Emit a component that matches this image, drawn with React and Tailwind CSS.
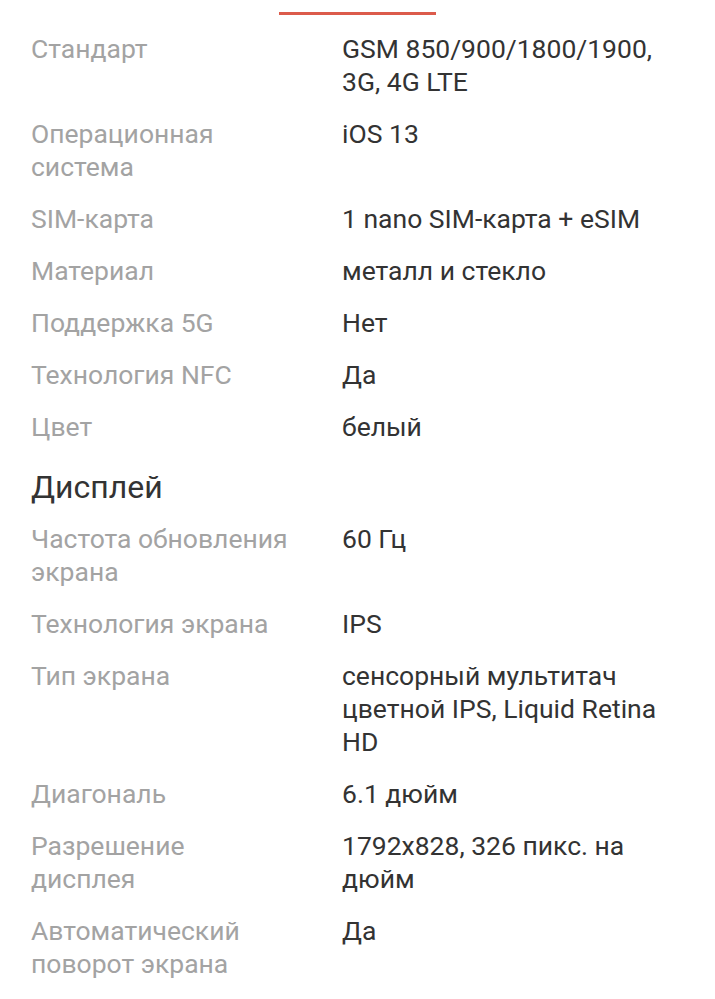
const general = [
  ["Стандарт", "GSM 850/900/1800/1900, 3G, 4G LTE"],
  ["Операционная система", "iOS 13"],
  ["SIM-карта", "1 nano SIM-карта + eSIM"],
  ["Материал", "металл и стекло"],
  ["Поддержка 5G", "Нет"],
  ["Технология NFC", "Да"],
  ["Цвет", "белый"],
];

const display = [
  ["Частота обновления экрана", "60 Гц"],
  ["Технология экрана", "IPS"],
  ["Тип экрана", "сенсорный мультитач цветной IPS, Liquid Retina HD"],
  ["Диагональ", "6.1 дюйм"],
  ["Разрешение дисплея", "1792x828, 326 пикс. на дюйм"],
  ["Автоматический поворот экрана", "Да"],
];

function SpecRow({ label, value }) {
  return (
    <div className="flex text-[26.5px] leading-[33px]">
      <div className="w-[311px] shrink-0 pr-[50px] text-[#a3a3a3]">{label}</div>
      <div className="flex-1 pr-[10px] text-[#333333]">{value}</div>
    </div>
  );
}

export default function App() {
  return (
    <div className="min-h-screen bg-white px-[31px] pb-[20px] font-['Roboto',sans-serif]">
      <div className="mx-auto mt-[12px] h-[3px] w-[157px] bg-[#dc5b4b]" />
      <div className="mt-[17px] flex flex-col gap-[19px]">
        {general.map(([label, value]) => (
          <SpecRow key={label} label={label} value={value} />
        ))}
      </div>
      <h2 className="mt-[24px] text-[32px] leading-[40px] text-[#333333]">Дисплей</h2>
      <div className="mt-[15px] flex flex-col gap-[19px]">
        {display.map(([label, value]) => (
          <SpecRow key={label} label={label} value={value} />
        ))}
      </div>
    </div>
  );
}
